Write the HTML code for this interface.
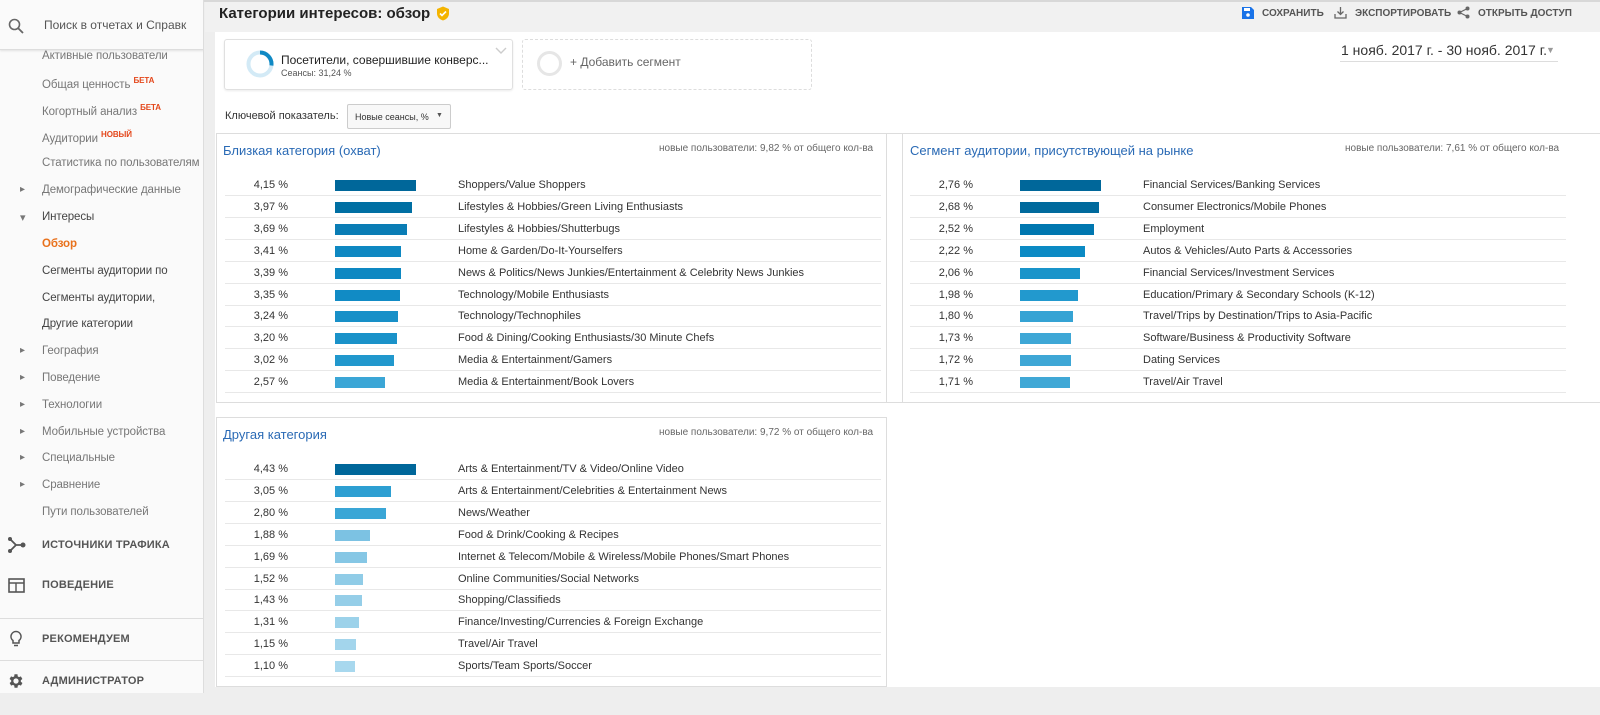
<!DOCTYPE html><html><head><meta charset="utf-8"><style>
*{box-sizing:border-box;margin:0;padding:0}
html,body{width:1600px;height:715px;overflow:hidden}
body{background:#eeeeee;font-family:"Liberation Sans",sans-serif;position:relative;color:#222}
.abs{position:absolute}
#side{left:0;top:0;width:204px;height:693px;background:#fafafa;border-right:1px solid #ddd;overflow:hidden}
.si{position:absolute;left:42px;font-size:11.5px;color:#777;white-space:nowrap;letter-spacing:-.1px}
.si.ar::before{content:"▸";position:absolute;left:-22px;font-size:10px;color:#777}
.si.dn::before{content:"▾";position:absolute;left:-22px;font-size:11px;color:#777}
sup{font-size:8px;color:#e4471b;font-weight:bold;vertical-align:5px}
.big{position:absolute;left:42px;font-size:11px;color:#555;font-weight:bold;letter-spacing:.2px}
.panel{position:absolute;background:#fff;border:1px solid #ddd}
.row{position:absolute;height:22px;border-bottom:1px solid #e8e8e8;font-size:11px;color:#333;white-space:nowrap}
.row span{position:absolute;top:5px}
.row .p{text-align:right;width:60px}
.row i{position:absolute;top:6px;height:11px}
.ttl{position:absolute;font-size:13px;color:#2a6ab5;white-space:nowrap}
.sub{position:absolute;font-size:10px;color:#666;white-space:nowrap}
</style></head><body>
<div class="abs" style="left:0;top:0;width:1600px;height:2px;background:#d8d8d8"></div>
<div id="side" class="abs">
 <div class="abs" style="left:0;top:0;width:204px;height:50px;border-bottom:1px solid #ddd;box-shadow:0 1px 2px rgba(0,0,0,.1)">
  <svg class="abs" style="left:8px;top:18px" width="16" height="16" viewBox="0 0 16 16"><circle cx="6.5" cy="6.5" r="5" fill="none" stroke="#666" stroke-width="1.6"/><path d="M10.2 10.2L15 15" stroke="#666" stroke-width="1.8"/></svg>
  <div class="abs" style="left:44px;top:18px;font-size:12px;color:#555;white-space:nowrap">Поиск в отчетах и Справк</div>
 </div>
 <div class="si" style="top:50px">Активные пользователи</div>
 <div class="si" style="top:76px">Общая ценность <sup>БЕТА</sup></div>
 <div class="si" style="top:103px">Когортный анализ <sup>БЕТА</sup></div>
 <div class="si" style="top:130px">Аудитории <sup>НОВЫЙ</sup></div>
 <div class="si" style="top:157px">Статистика по пользователям</div>
 <div class="si ar" style="top:184px">Демографические данные</div>
 <div class="si dn" style="top:211px;color:#444">Интересы</div>
 <div class="si" style="top:238px;color:#e8711c;font-weight:bold">Обзор</div>
 <div class="si" style="top:265px;color:#444">Сегменты аудитории по</div>
 <div class="si" style="top:292px;color:#444">Сегменты аудитории,</div>
 <div class="si" style="top:318px;color:#444">Другие категории</div>
 <div class="si ar" style="top:345px">География</div>
 <div class="si ar" style="top:372px">Поведение</div>
 <div class="si ar" style="top:399px">Технологии</div>
 <div class="si ar" style="top:426px">Мобильные устройства</div>
 <div class="si ar" style="top:452px">Специальные</div>
 <div class="si ar" style="top:479px">Сравнение</div>
 <div class="si" style="top:506px">Пути пользователей</div>
 <svg class="abs" style="left:8px;top:537px" width="18" height="16" viewBox="0 0 18 16"><circle cx="2" cy="2" r="2" fill="#555"/><circle cx="2" cy="14" r="2" fill="#555"/><circle cx="15" cy="8" r="2.5" fill="#555"/><path d="M2 2L8 8L2 14M8 8H15" stroke="#555" stroke-width="1.8" fill="none"/></svg>
 <div class="big" style="top:539px">ИСТОЧНИКИ ТРАФИКА</div>
 <svg class="abs" style="left:8px;top:578px" width="17" height="15" viewBox="0 0 17 15"><rect x="1" y="1" width="15" height="13" fill="none" stroke="#555" stroke-width="1.6"/><path d="M1 5H16M8 5V14" stroke="#555" stroke-width="1.4"/></svg>
 <div class="big" style="top:579px">ПОВЕДЕНИЕ</div>
 <div class="abs" style="left:0;top:618px;width:204px;height:1px;background:#ddd"></div>
 <svg class="abs" style="left:9px;top:630px" width="14" height="18" viewBox="0 0 14 18"><path d="M7 1.5a5 5 0 0 0-3 9v2.5h6v-2.5a5 5 0 0 0-3-9zM5 15.5h4" fill="none" stroke="#555" stroke-width="1.5"/></svg>
 <div class="big" style="top:633px">РЕКОМЕНДУЕМ</div>
 <div class="abs" style="left:0;top:660px;width:204px;height:1px;background:#ddd"></div>
 <svg class="abs" style="left:7px;top:672px" width="18" height="18" viewBox="0 0 24 24"><path fill="#555" d="M19.4 13a7.5 7.5 0 0 0 0-2l2.1-1.6-2-3.5-2.5 1a7 7 0 0 0-1.7-1L15 3h-4l-.4 2.9a7 7 0 0 0-1.7 1l-2.5-1-2 3.5L6.6 11a7.5 7.5 0 0 0 0 2l-2.1 1.6 2 3.5 2.5-1a7 7 0 0 0 1.7 1L11 21h4l.4-2.9a7 7 0 0 0 1.7-1l2.5 1 2-3.5zM13 15.5a3.5 3.5 0 1 1 0-7 3.5 3.5 0 0 1 0 7z" transform="translate(-1 0)"/></svg>
 <div class="big" style="top:675px">АДМИНИСТРАТОР</div>
</div>

<div class="abs" style="left:205px;top:2px;width:1395px;height:30px;background:#f1f1f1"></div>
<div class="abs" style="left:219px;top:5px;font-size:15px;font-weight:bold;color:#222;white-space:nowrap">Категории интересов: обзор</div>
<svg class="abs" style="left:436px;top:6px" width="14" height="15" viewBox="0 0 14 15"><path d="M7 0.5L13 3v4.5c0 3.5-2.7 6-6 7-3.3-1-6-3.5-6-7V3z" fill="#f4b400"/><path d="M4 7.5l2 2 4-4" stroke="#fff" stroke-width="1.6" fill="none"/></svg>
<svg class="abs" style="left:1242px;top:7px" width="12" height="12" viewBox="0 0 12 12"><path d="M0 0h9l3 3v9H0z" fill="#1a73e8"/><rect x="2" y="1" width="6" height="3" fill="#fff"/><circle cx="6" cy="8" r="1.8" fill="#fff"/></svg>
<div class="abs" style="left:1262px;top:8px;font-size:10px;font-weight:bold;color:#555">СОХРАНИТЬ</div>
<svg class="abs" style="left:1334px;top:6px" width="13" height="13" viewBox="0 0 13 13"><path d="M6.5 1v7M3.5 5.5l3 3 3-3M1 8v4h11V8" stroke="#666" stroke-width="1.3" fill="none"/></svg>
<div class="abs" style="left:1355px;top:8px;font-size:10px;font-weight:bold;color:#555">ЭКСПОРТИРОВАТЬ</div>
<svg class="abs" style="left:1457px;top:6px" width="13" height="13" viewBox="0 0 13 13"><circle cx="10.5" cy="2.5" r="2" fill="#666"/><circle cx="2.5" cy="6.5" r="2" fill="#666"/><circle cx="10.5" cy="10.5" r="2" fill="#666"/><path d="M10.5 2.5L2.5 6.5L10.5 10.5" stroke="#666" stroke-width="1.2" fill="none"/></svg>
<div class="abs" style="left:1478px;top:8px;font-size:10px;font-weight:bold;color:#555">ОТКРЫТЬ ДОСТУП</div>

<div class="abs" style="left:215px;top:32px;width:1385px;height:655px;background:#fff"></div>
<div class="abs" style="left:224px;top:39px;width:289px;height:51px;border:1px solid #e0e0e0;border-radius:3px;box-shadow:0 1px 2px rgba(0,0,0,.08)"></div>
<svg class="abs" style="left:246px;top:50px" width="28" height="28" viewBox="0 0 28 28"><circle cx="14" cy="14" r="11.5" fill="none" stroke="#d3eaf6" stroke-width="4"/><path d="M14 2.5A11.5 11.5 0 0 1 25.4 15.5" fill="none" stroke="#0f89c4" stroke-width="4"/></svg>
<div class="abs" style="left:281px;top:53px;font-size:12px;color:#222;white-space:nowrap">Посетители, совершившие конверс...</div>
<div class="abs" style="left:281px;top:68px;font-size:9px;color:#555">Сеансы: 31,24 %</div>
<svg class="abs" style="left:495px;top:47px" width="12" height="8" viewBox="0 0 12 8"><path d="M1 1l5 5 5-5" stroke="#ccc" stroke-width="1.4" fill="none"/></svg>
<div class="abs" style="left:522px;top:39px;width:290px;height:51px;border:1px dashed #ddd;border-radius:3px"></div>
<div class="abs" style="left:537px;top:51px;width:25px;height:25px;border:3px solid #e6e6e6;border-radius:50%"></div>
<div class="abs" style="left:570px;top:55px;font-size:12px;color:#666">+ Добавить сегмент</div>
<div class="abs" style="left:1341px;top:42px;font-size:14px;color:#333;white-space:nowrap">1 нояб. 2017 г. - 30 нояб. 2017 г.</div>
<div class="abs" style="left:1546px;top:45px;font-size:9px;color:#999">▼</div>
<div class="abs" style="left:1340px;top:61px;width:218px;height:1px;background:#ddd"></div>
<div class="abs" style="left:225px;top:110px;font-size:11px;color:#333;white-space:nowrap">Ключевой показатель:</div>
<div class="abs" style="left:347px;top:104px;width:104px;height:25px;border:1px solid #ccc;border-radius:2px;background:#f8f8f8;font-size:9px;color:#333;padding:7px 0 0 7px;white-space:nowrap">Новые сеансы, %<span style="position:absolute;left:88px;top:7px;font-size:7px;color:#555">▼</span></div>

<div class="panel" style="left:216px;top:133px;width:1384px;height:270px;border-right:none"></div>
<div class="abs" style="left:886px;top:133px;width:1px;height:270px;background:#ddd"></div>
<div class="abs" style="left:902px;top:133px;width:1px;height:270px;background:#ddd"></div>
<div class="panel" style="left:216px;top:417px;width:671px;height:270px"></div>

<div class="ttl" style="left:223px;top:143px">Близкая категория (охват)</div>
<div class="sub" style="left:659px;top:143px">новые пользователи: 9,82 % от общего кол-ва</div>
<div class="ttl" style="left:910px;top:143px">Сегмент аудитории, присутствующей на рынке</div>
<div class="sub" style="left:1345px;top:143px">новые пользователи: 7,61 % от общего кол-ва</div>
<div class="ttl" style="left:223px;top:427px">Другая категория</div>
<div class="sub" style="left:659px;top:427px">новые пользователи: 9,72 % от общего кол-ва</div>

<div id="t1"></div>
<script>
function tbl(x,w,top,data){var h='';data.forEach(function(d,i){h+='<div class="row" style="left:'+x+'px;top:'+(top+i*21.9)+'px;width:'+w+'px"><span class="p" style="left:3px">'+d[0]+'</span><i style="left:110px;width:'+d[1]+'px;background:'+d[2]+'"></i><span style="left:233px">'+d[3]+'</span></div>'});return h;}
var A=[["4,15 %",81,"#00679a","Shoppers/Value Shoppers"],["3,97 %",77,"#006fa3","Lifestyles &amp; Hobbies/Green Living Enthusiasts"],["3,69 %",72,"#0a7db5","Lifestyles &amp; Hobbies/Shutterbugs"],["3,41 %",66,"#0e88c2","Home &amp; Garden/Do-It-Yourselfers"],["3,39 %",66,"#0e88c2","News &amp; Politics/News Junkies/Entertainment &amp; Celebrity News Junkies"],["3,35 %",65,"#118bc5","Technology/Mobile Enthusiasts"],["3,24 %",63,"#1890c8","Technology/Technophiles"],["3,20 %",62,"#1a92c9","Food &amp; Dining/Cooking Enthusiasts/30 Minute Chefs"],["3,02 %",59,"#2198cd","Media &amp; Entertainment/Gamers"],["2,57 %",50,"#3ba6d6","Media &amp; Entertainment/Book Lovers"]];
var B=[["2,76 %",81,"#00679a","Financial Services/Banking Services"],["2,68 %",79,"#006a9d","Consumer Electronics/Mobile Phones"],["2,52 %",74,"#0077b0","Employment"],["2,22 %",65,"#0b8ac4","Autos &amp; Vehicles/Auto Parts &amp; Accessories"],["2,06 %",60,"#1994ca","Financial Services/Investment Services"],["1,98 %",58,"#2299ce","Education/Primary &amp; Secondary Schools (K-12)"],["1,80 %",53,"#35a3d4","Travel/Trips by Destination/Trips to Asia-Pacific"],["1,73 %",51,"#3ea7d6","Software/Business &amp; Productivity Software"],["1,72 %",51,"#3ea7d6","Dating Services"],["1,71 %",50,"#40a8d6","Travel/Air Travel"]];
var C=[["4,43 %",81,"#00679a","Arts &amp; Entertainment/TV &amp; Video/Online Video"],["3,05 %",56,"#2d9fd2","Arts &amp; Entertainment/Celebrities &amp; Entertainment News"],["2,80 %",51,"#3aa6d6","News/Weather"],["1,88 %",35,"#7cc2e3","Food &amp; Drink/Cooking &amp; Recipes"],["1,69 %",32,"#86c7e5","Internet &amp; Telecom/Mobile &amp; Wireless/Mobile Phones/Smart Phones"],["1,52 %",28,"#90cce7","Online Communities/Social Networks"],["1,43 %",27,"#95cee8","Shopping/Classifieds"],["1,31 %",24,"#9cd2ea","Finance/Investing/Currencies &amp; Foreign Exchange"],["1,15 %",21,"#a3d5ec","Travel/Air Travel"],["1,10 %",20,"#a8d8ee","Sports/Team Sports/Soccer"]];
document.getElementById('t1').innerHTML=tbl(225,656,174,A)+tbl(910,656,174,B)+tbl(225,656,458,C);
</script>
</body></html>
